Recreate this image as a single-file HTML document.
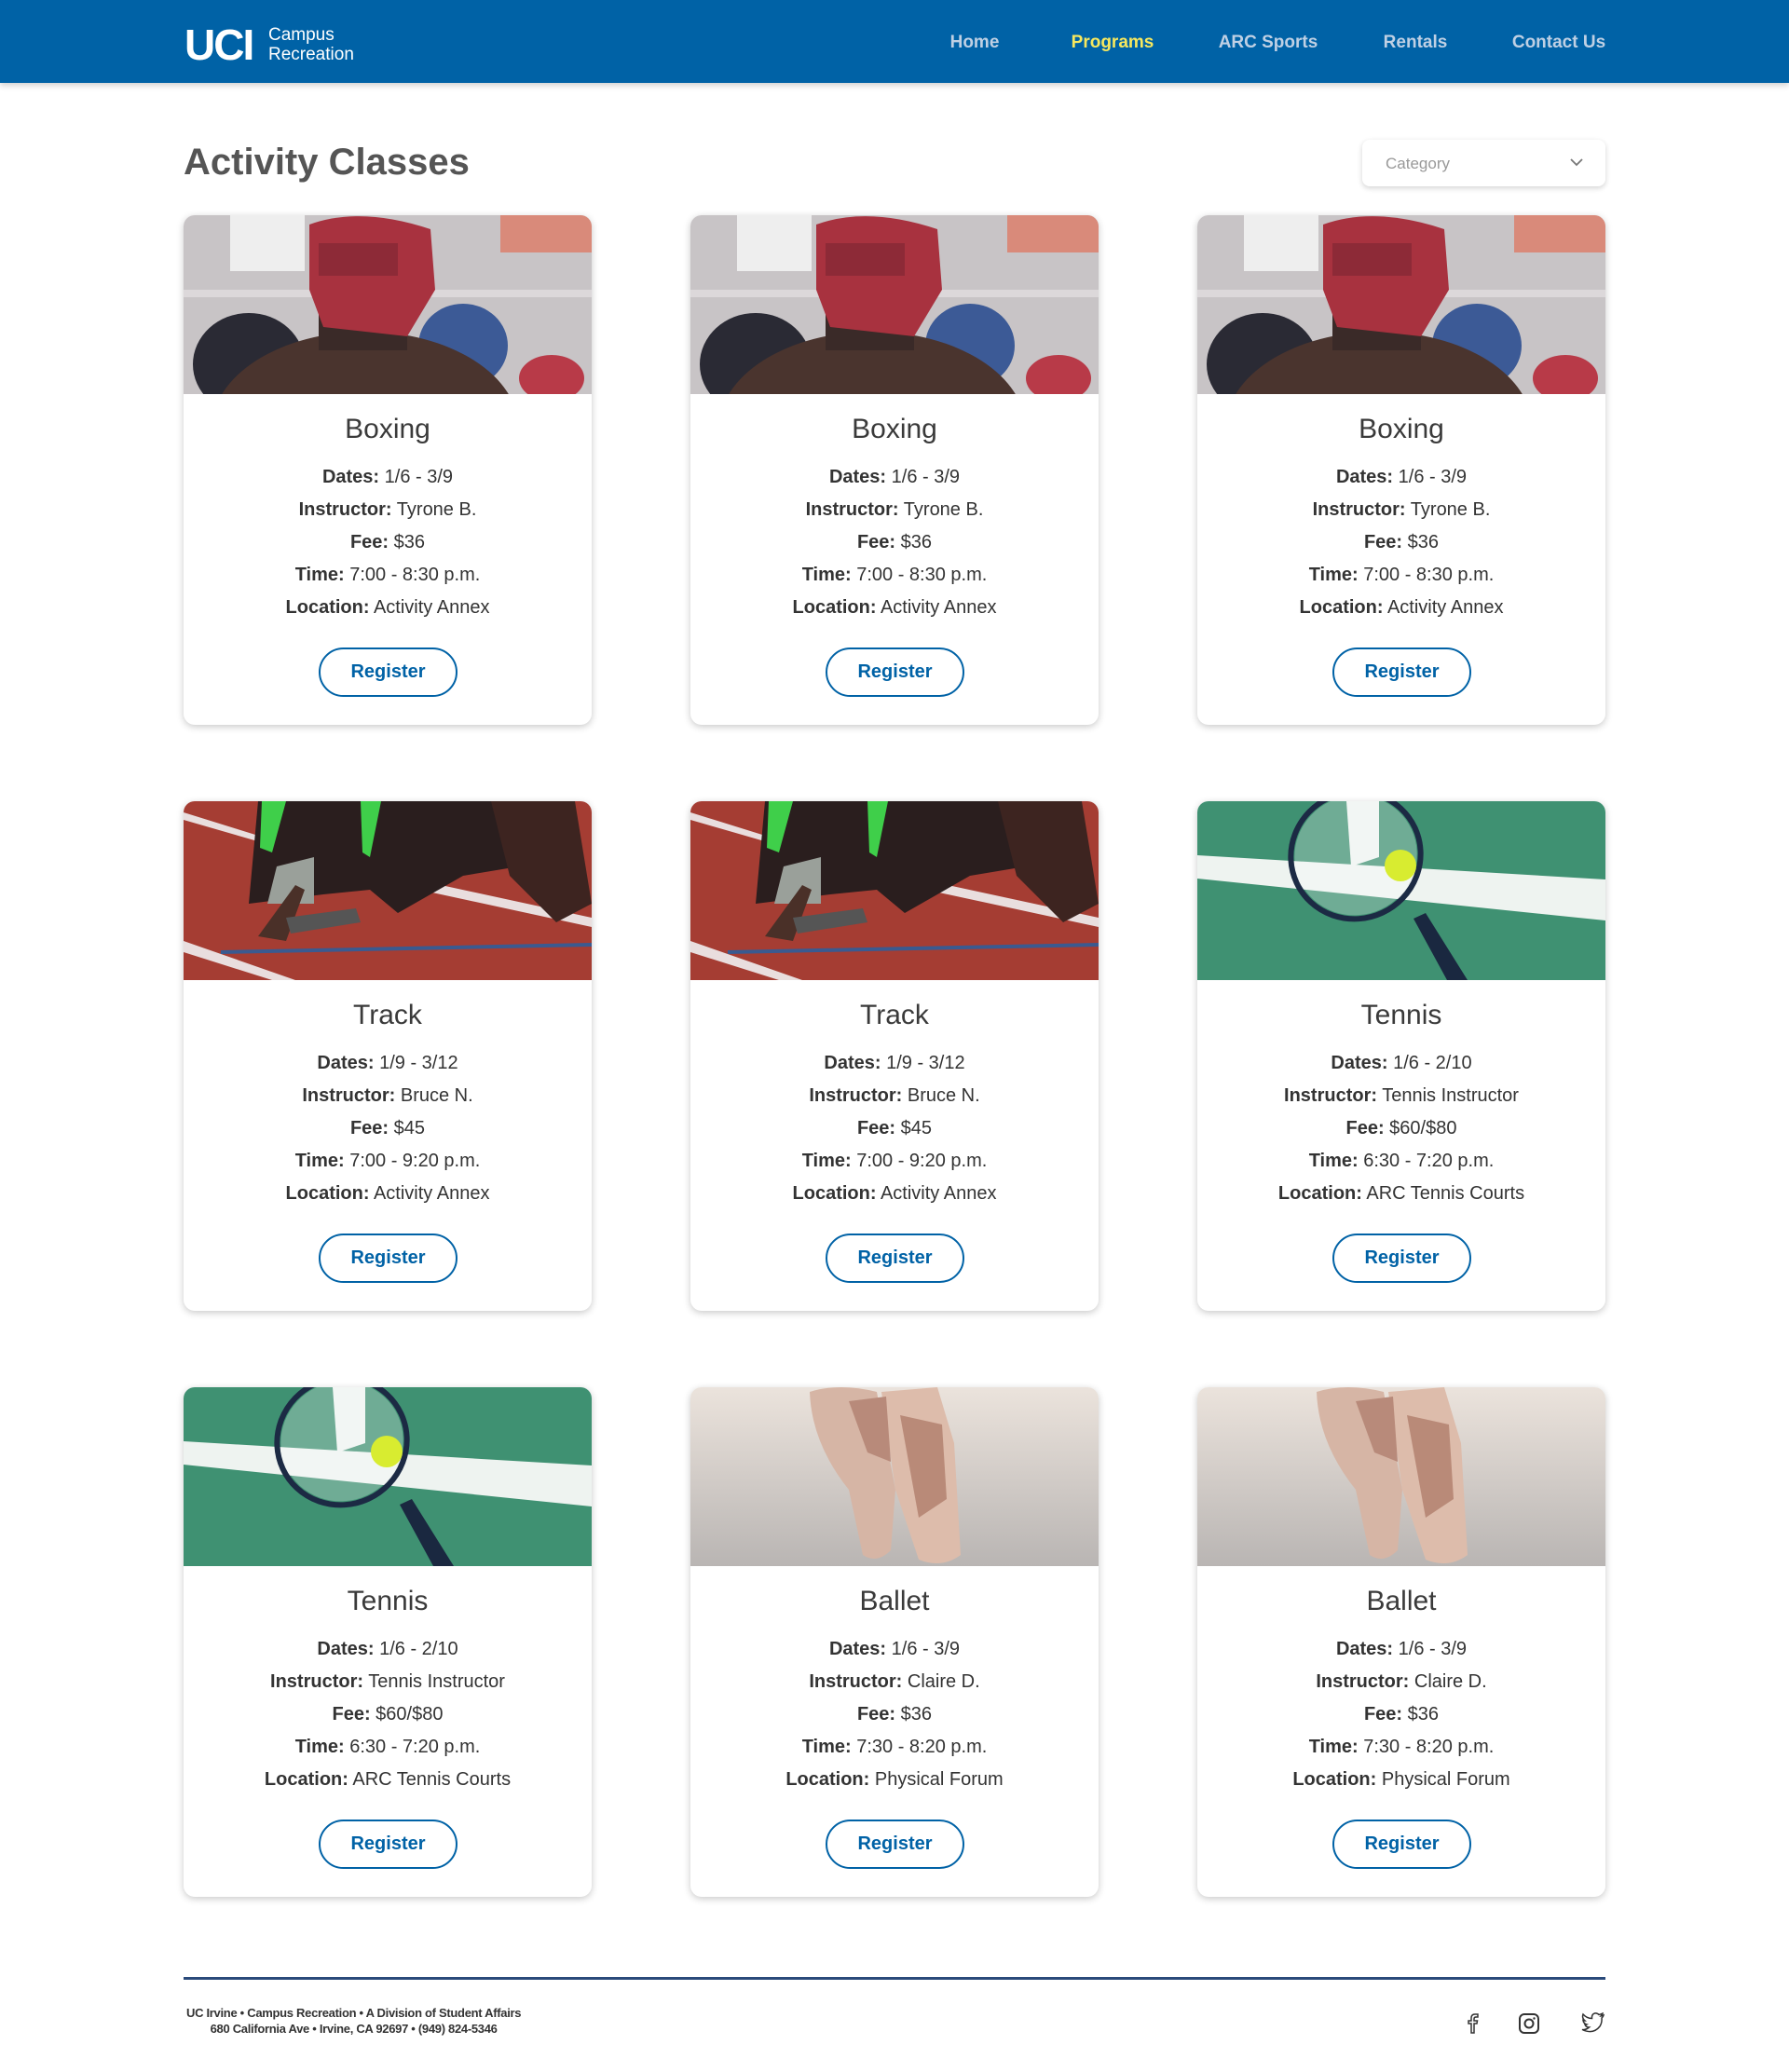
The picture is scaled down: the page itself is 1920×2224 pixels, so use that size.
<!DOCTYPE html>
<html><head><meta charset="utf-8"><style>
*{margin:0;padding:0;box-sizing:border-box}
body{width:1920px;height:2224px;background:#fff;font-family:"Liberation Sans",Arial,sans-serif;position:relative;overflow:hidden}
.hdr{position:absolute;left:0;top:0;width:1920px;height:89px;background:#0062a6;box-shadow:0 3px 6px rgba(0,0,0,.18)}
.logo{position:absolute;left:198px;top:26px;color:#fff}
.logo .u{font-size:46px;font-weight:bold;letter-spacing:-2px;line-height:44px;position:absolute;left:0;top:0;white-space:nowrap}
.logo .t{position:absolute;left:90px;top:1px;font-size:19px;line-height:21px;white-space:nowrap}
.nav a{position:absolute;top:35px;font-size:19px;font-weight:bold;color:#bfd0e4;text-decoration:none;transform:translateX(-50%);white-space:nowrap}
h1{position:absolute;left:197px;top:152px;font-size:40px;color:#555;font-weight:bold}
.sel{position:absolute;left:1462px;top:150px;width:261px;height:50px;border-radius:8px;background:#fff;box-shadow:0 2px 6px rgba(0,0,0,.18)}
.sel span{position:absolute;left:25px;top:16px;font-size:17px;color:#999}
.card{position:absolute;width:438px;height:547px;border-radius:12px;background:#fff;box-shadow:0 2px 8px rgba(0,0,0,.22);overflow:hidden;text-align:center;color:#333}
.card svg{display:block}
.card h2{position:absolute;left:0;right:0;top:213px;font-size:30px;font-weight:normal;color:#3a3a3a}
.card .l{position:absolute;left:0;right:0;font-size:20px;line-height:24px;margin-top:2px}
.card .l b{font-weight:bold}
.btn{position:absolute;left:145px;top:464px;width:149px;height:53px;border:2.5px solid #0062a6;border-radius:27px;color:#0062a6;font-size:20px;font-weight:bold;line-height:48px}
.foot{position:absolute;left:197px;top:2122px;width:1526px;height:3px;background:#2a4a7a}
.ft{position:absolute;left:200px;top:2152px;font-size:13px;line-height:17px;color:#333;text-align:center;font-weight:bold;letter-spacing:-0.3px}
</style></head><body>
<svg width="0" height="0" style="position:absolute"><defs>
<linearGradient id="gb" x1="0" y1="0" x2="0" y2="1"><stop offset="0" stop-color="#ebe3dc"/><stop offset="1" stop-color="#b9b5b3"/></linearGradient>
<symbol id="box" viewBox="0 0 438 192"><rect width="438" height="192" fill="#c8c4c6"/><rect x="50" y="0" width="80" height="60" fill="#eeeeee"/><rect x="340" y="0" width="98" height="40" fill="#d98a7a"/><rect x="0" y="80" width="438" height="8" fill="#dcd8da"/><ellipse cx="70" cy="160" rx="60" ry="55" fill="#2a2a34"/><ellipse cx="300" cy="140" rx="48" ry="45" fill="#3c5a96"/><ellipse cx="395" cy="175" rx="35" ry="25" fill="#b83a48"/><ellipse cx="195" cy="230" rx="165" ry="105" fill="#4a342e"/><rect x="145" y="85" width="95" height="60" fill="#3a2a28"/><path d="M135 10 Q190 -10 265 15 L270 80 L240 130 L150 120 L135 80Z" fill="#a8323f"/><rect x="145" y="30" width="85" height="35" fill="#8d2a37"/></symbol>
<symbol id="trk" viewBox="0 0 438 192"><rect width="438" height="192" fill="#a53d33"/><path d="M0 12 L90 40 L90 46 L0 20Z M0 150 L120 192 L95 192 L0 162Z M230 80 L438 125 L438 135 L230 90Z" fill="#e9dede"/><path d="M40 160 L438 152 L438 156 L40 164Z" fill="#3a5a90"/><path d="M80 0 L350 0 L360 70 L300 80 L230 120 L200 95 L150 100 L70 110Z" fill="#2a1e1e"/><path d="M330 0 L420 0 L438 110 L400 130 L350 80Z" fill="#3d2420"/><path d="M100 70 L140 60 L140 110 L90 110Z" fill="#9aa09a"/><path d="M80 145 L120 90 L130 95 L110 150Z" fill="#4a3028"/><path d="M110 125 L185 115 L190 130 L115 142Z" fill="#555"/><path d="M84 0 L110 0 L95 55 L82 50Z M190 0 L212 0 L200 60 L192 55Z" fill="#3fcf4a"/></symbol>
<symbol id="ten" viewBox="0 0 438 192"><rect width="438" height="192" fill="#3f9172"/><path d="M0 58 L438 84 L438 128 L0 83Z" fill="#eef3f0"/><path d="M160 0 L195 0 L195 60 L165 70Z" fill="#eef3f0"/><path d="M245 120 L290 192 L268 192 L232 126Z" fill="#1a2840"/><ellipse cx="170" cy="58" rx="70" ry="68" transform="rotate(-25 170 58)" fill="none" stroke="#1c2a44" stroke-width="6"/><ellipse cx="170" cy="58" rx="66" ry="64" transform="rotate(-25 170 58)" fill="#fff" opacity=".25"/><circle cx="218" cy="69" r="17" fill="#d8ec30"/></symbol>
<symbol id="bal" viewBox="0 0 438 192"><rect width="438" height="192" fill="url(#gb)"/><path d="M128 5 Q160 -5 200 5 L220 110 L215 175 Q200 190 185 180 L170 110 Q130 60 128 5Z" fill="#d6b5a5"/><path d="M205 5 L265 0 L283 60 L290 180 Q270 195 245 185 L220 110 Z" fill="#ddbcab"/><path d="M225 30 L270 40 L275 120 L245 140 Z" fill="#b98a78"/><path d="M170 15 L210 10 L215 80 L190 70Z" fill="#b88a7a"/></symbol>
</defs></svg>

<div class="hdr">
 <div class="logo"><div class="u">UCI</div><div class="t">Campus<br>Recreation</div></div>
 <div class="nav"><a style="left:1046px">Home</a><a style="left:1194px;color:#f7e85e">Programs</a><a style="left:1361px">ARC Sports</a><a style="left:1519px">Rentals</a><a style="left:1673px">Contact Us</a></div>
</div>
<h1>Activity Classes</h1>
<div class="sel"><span>Category</span><svg style="position:absolute;left:222px;top:18px" width="16" height="12" viewBox="0 0 16 12"><path d="M2 3 L8 9 L14 3" fill="none" stroke="#777" stroke-width="1.8"/></svg></div>

<div class="card" style="left:197px;top:231px"><svg width="438" height="192"><use href="#box"/></svg><h2>Boxing</h2><div class="l" style="top:267px"><b>Dates:</b> 1/6 - 3/9</div><div class="l" style="top:302px"><b>Instructor:</b> Tyrone B.</div><div class="l" style="top:337px"><b>Fee:</b> $36</div><div class="l" style="top:372px"><b>Time:</b> 7:00 - 8:30 p.m.</div><div class="l" style="top:407px"><b>Location:</b> Activity Annex</div><div class="btn">Register</div></div>
<div class="card" style="left:741px;top:231px"><svg width="438" height="192"><use href="#box"/></svg><h2>Boxing</h2><div class="l" style="top:267px"><b>Dates:</b> 1/6 - 3/9</div><div class="l" style="top:302px"><b>Instructor:</b> Tyrone B.</div><div class="l" style="top:337px"><b>Fee:</b> $36</div><div class="l" style="top:372px"><b>Time:</b> 7:00 - 8:30 p.m.</div><div class="l" style="top:407px"><b>Location:</b> Activity Annex</div><div class="btn">Register</div></div>
<div class="card" style="left:1285px;top:231px"><svg width="438" height="192"><use href="#box"/></svg><h2>Boxing</h2><div class="l" style="top:267px"><b>Dates:</b> 1/6 - 3/9</div><div class="l" style="top:302px"><b>Instructor:</b> Tyrone B.</div><div class="l" style="top:337px"><b>Fee:</b> $36</div><div class="l" style="top:372px"><b>Time:</b> 7:00 - 8:30 p.m.</div><div class="l" style="top:407px"><b>Location:</b> Activity Annex</div><div class="btn">Register</div></div>

<div class="card" style="left:197px;top:860px"><svg width="438" height="192"><use href="#trk"/></svg><h2>Track</h2><div class="l" style="top:267px"><b>Dates:</b> 1/9 - 3/12</div><div class="l" style="top:302px"><b>Instructor:</b> Bruce N.</div><div class="l" style="top:337px"><b>Fee:</b> $45</div><div class="l" style="top:372px"><b>Time:</b> 7:00 - 9:20 p.m.</div><div class="l" style="top:407px"><b>Location:</b> Activity Annex</div><div class="btn">Register</div></div>
<div class="card" style="left:741px;top:860px"><svg width="438" height="192"><use href="#trk"/></svg><h2>Track</h2><div class="l" style="top:267px"><b>Dates:</b> 1/9 - 3/12</div><div class="l" style="top:302px"><b>Instructor:</b> Bruce N.</div><div class="l" style="top:337px"><b>Fee:</b> $45</div><div class="l" style="top:372px"><b>Time:</b> 7:00 - 9:20 p.m.</div><div class="l" style="top:407px"><b>Location:</b> Activity Annex</div><div class="btn">Register</div></div>
<div class="card" style="left:1285px;top:860px"><svg width="438" height="192"><use href="#ten"/></svg><h2>Tennis</h2><div class="l" style="top:267px"><b>Dates:</b> 1/6 - 2/10</div><div class="l" style="top:302px"><b>Instructor:</b> Tennis Instructor</div><div class="l" style="top:337px"><b>Fee:</b> $60/$80</div><div class="l" style="top:372px"><b>Time:</b> 6:30 - 7:20 p.m.</div><div class="l" style="top:407px"><b>Location:</b> ARC Tennis Courts</div><div class="btn">Register</div></div>

<div class="card" style="left:197px;top:1489px"><svg width="438" height="192"><use href="#ten"/></svg><h2>Tennis</h2><div class="l" style="top:267px"><b>Dates:</b> 1/6 - 2/10</div><div class="l" style="top:302px"><b>Instructor:</b> Tennis Instructor</div><div class="l" style="top:337px"><b>Fee:</b> $60/$80</div><div class="l" style="top:372px"><b>Time:</b> 6:30 - 7:20 p.m.</div><div class="l" style="top:407px"><b>Location:</b> ARC Tennis Courts</div><div class="btn">Register</div></div>
<div class="card" style="left:741px;top:1489px"><svg width="438" height="192"><use href="#bal"/></svg><h2>Ballet</h2><div class="l" style="top:267px"><b>Dates:</b> 1/6 - 3/9</div><div class="l" style="top:302px"><b>Instructor:</b> Claire D.</div><div class="l" style="top:337px"><b>Fee:</b> $36</div><div class="l" style="top:372px"><b>Time:</b> 7:30 - 8:20 p.m.</div><div class="l" style="top:407px"><b>Location:</b> Physical Forum</div><div class="btn">Register</div></div>
<div class="card" style="left:1285px;top:1489px"><svg width="438" height="192"><use href="#bal"/></svg><h2>Ballet</h2><div class="l" style="top:267px"><b>Dates:</b> 1/6 - 3/9</div><div class="l" style="top:302px"><b>Instructor:</b> Claire D.</div><div class="l" style="top:337px"><b>Fee:</b> $36</div><div class="l" style="top:372px"><b>Time:</b> 7:30 - 8:20 p.m.</div><div class="l" style="top:407px"><b>Location:</b> Physical Forum</div><div class="btn">Register</div></div>

<div class="foot"></div>
<div class="ft">UC Irvine • Campus Recreation • A Division of Student Affairs<br>680 California Ave • Irvine, CA 92697 • (949) 824-5346</div>
<svg style="position:absolute;left:1570px;top:2159px" width="20" height="24" viewBox="0 0 20 24"><path d="M12 23 V13 H15 L15.5 10 H12 V8 Q12 6 14 6 H16 V3 H13 Q9 3 9 7 V10 H6 V13 H9 V23Z" fill="none" stroke="#333" stroke-width="1.5"/></svg>
<svg style="position:absolute;left:1629px;top:2160px" width="24" height="24" viewBox="0 0 24 24"><rect x="2" y="2" width="20" height="20" rx="5" fill="none" stroke="#333" stroke-width="2"/><circle cx="12" cy="12" r="4.5" fill="none" stroke="#333" stroke-width="2"/><circle cx="17.5" cy="6.5" r="1.2" fill="#333"/></svg>
<svg style="position:absolute;left:1697px;top:2160px" width="26" height="22" viewBox="0 0 26 22"><path d="M24 3 Q22 4 21 4 Q23 2 23 1 Q21 2 19 2.5 Q17 0.5 14.5 1 Q11 2 11.5 6.5 Q6 6.5 2 2 Q0.5 6 4 9 Q3 9 2 8.5 Q2.5 12 6 13 Q5 13.5 4 13 Q5 16 8.5 16 Q5 19 1 18.5 Q13 24 20 15 Q22.5 11 22 6 Q23.5 5 24 3Z" fill="none" stroke="#333" stroke-width="1.5"/></svg>
</body></html>
